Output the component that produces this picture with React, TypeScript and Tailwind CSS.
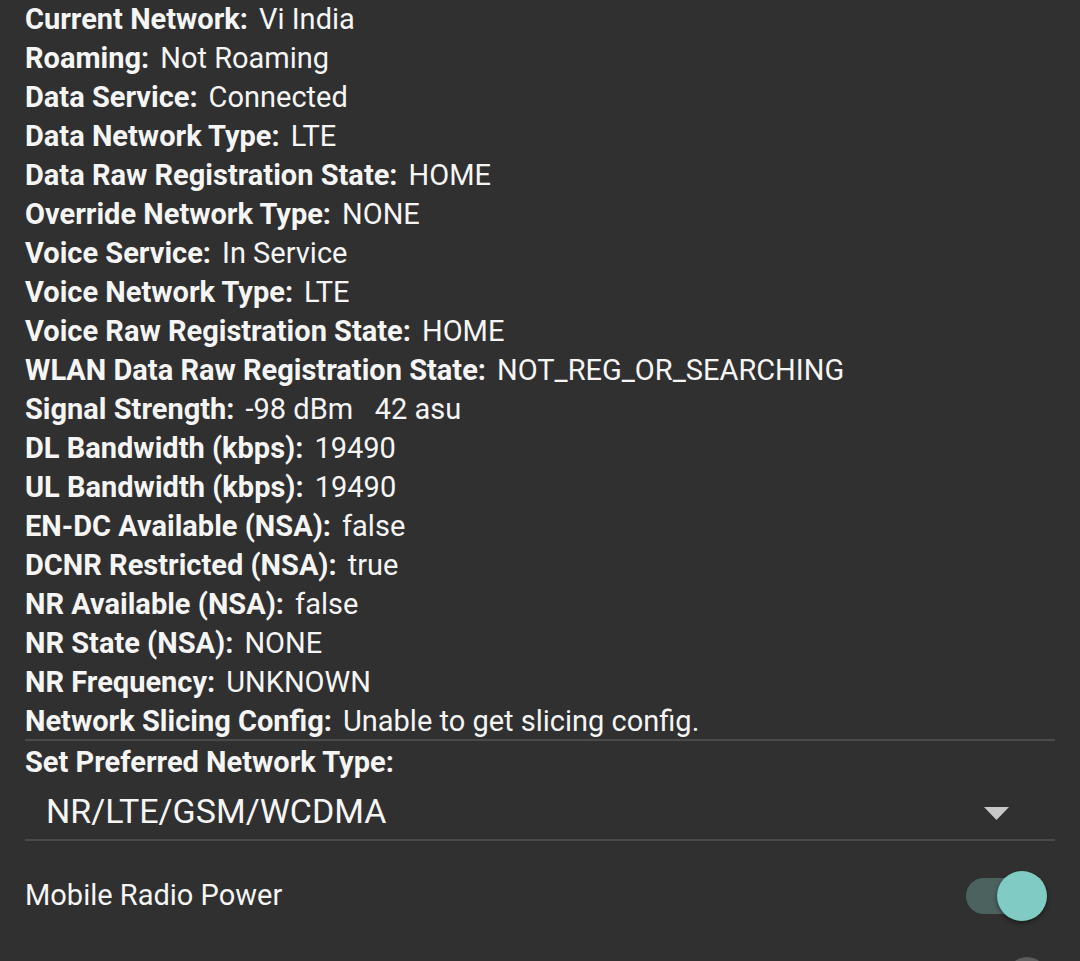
import React from 'react';

const rows: [string, string][] = [
  ['Current Network:', 'Vi India'],
  ['Roaming:', 'Not Roaming'],
  ['Data Service:', 'Connected'],
  ['Data Network Type:', 'LTE'],
  ['Data Raw Registration State:', 'HOME'],
  ['Override Network Type:', 'NONE'],
  ['Voice Service:', 'In Service'],
  ['Voice Network Type:', 'LTE'],
  ['Voice Raw Registration State:', 'HOME'],
  ['WLAN Data Raw Registration State:', 'NOT_REG_OR_SEARCHING'],
  ['Signal Strength:', '-98 dBm   42 asu'],
  ['DL Bandwidth (kbps):', '19490'],
  ['UL Bandwidth (kbps):', '19490'],
  ['EN-DC Available (NSA):', 'false'],
  ['DCNR Restricted (NSA):', 'true'],
  ['NR Available (NSA):', 'false'],
  ['NR State (NSA):', 'NONE'],
  ['NR Frequency:', 'UNKNOWN'],
  ['Network Slicing Config:', 'Unable to get slicing config.'],
];

export default function App() {
  return (
    <div
      className="w-[1080px] h-[961px] overflow-hidden bg-[#303030] text-[#f5f5f5]"
      style={{ fontFamily: 'Roboto, "Noto Sans", sans-serif' }}
    >
      <div className="px-[25px]">
        {rows.map(([label, value]) => (
          <div key={label} className="flex h-[39px] items-center text-[29px] leading-[39px] whitespace-pre">
            <span className="font-bold">{label}</span>
            <span className="ml-[11px]">{value}</span>
          </div>
        ))}
        <div className="-mt-[2px] h-[2px] bg-[#4a4a4a]" />
        <div className="flex h-[44px] items-center text-[29px] font-bold">Set Preferred Network Type:</div>
        <div className="flex h-[54px] items-center justify-between pl-[21px] pr-[46px]">
          <span className="mb-[3px] text-[34px] leading-none">NR/LTE/GSM/WCDMA</span>
          <svg width="25" height="13" viewBox="0 0 25 13" className="mt-[2px]">
            <polygon points="0,0 25,0 12.5,13" fill="#c8c8c8" />
          </svg>
        </div>
        <div className="h-[2px] bg-[#4a4a4a]" />
        <div className="flex h-[110px] items-center justify-between">
          <span className="text-[29px]">Mobile Radio Power</span>
          <div className="relative mr-[8px] h-[50px] w-[81px]">
            <div className="absolute left-0 top-[7px] h-[36px] w-[64px] rounded-full bg-[#4b625f]" />
            <div className="absolute right-0 top-0 h-[50px] w-[50px] rounded-full bg-[#80cbc4] shadow-[0_2px_4px_rgba(0,0,0,0.45)]" />
          </div>
        </div>
        <div className="flex justify-end pr-[8px] pt-[6px]">
          <div className="h-[50px] w-[40px] rounded-t-full bg-[#5c5c5c]" />
        </div>
      </div>
    </div>
  );
}
